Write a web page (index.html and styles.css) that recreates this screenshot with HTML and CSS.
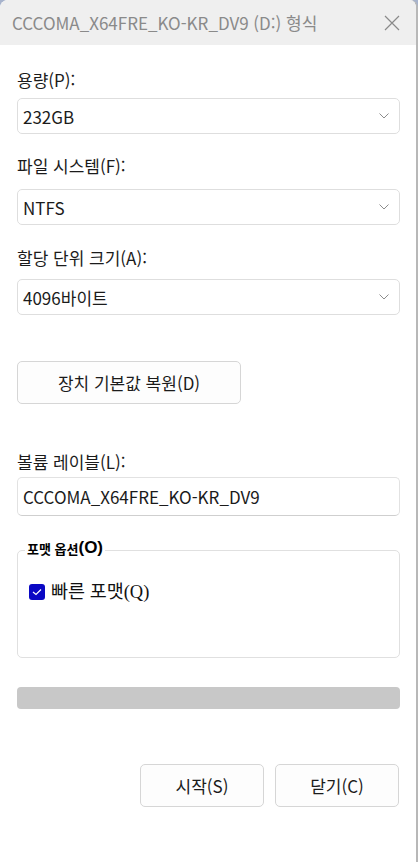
FILE: index.html
```html
<!DOCTYPE html>
<html lang="ko">
<head>
<meta charset="utf-8">
<title>형식</title>
<link rel="stylesheet" href="styles.css">
</head>
<body>
<div class="window">
  <div class="titlebar">
    <span class="title">CCCOMA_X64FRE_KO-KR_DV9 (D:) 형식</span>
    <svg class="close" width="16" height="16" viewBox="0 0 16 16"><path d="M1 1 L15 15 M15 1 L1 15" stroke="#8a8a8a" stroke-width="1.2" fill="none"/></svg>
  </div>
  <div class="content">
    <div class="label l1">용량(P):</div>
    <div class="select s1"><span>232GB</span><svg class="chev" width="10" height="6" viewBox="0 0 10 6"><path d="M0.5 0.5 L5 5 L9.5 0.5" stroke="#8c8c8c" stroke-width="1" fill="none"/></svg></div>
    <div class="label l2">파일 시스템(F):</div>
    <div class="select s2"><span>NTFS</span><svg class="chev" width="10" height="6" viewBox="0 0 10 6"><path d="M0.5 0.5 L5 5 L9.5 0.5" stroke="#8c8c8c" stroke-width="1" fill="none"/></svg></div>
    <div class="label l3">할당 단위 크기(A):</div>
    <div class="select s3"><span>4096바이트</span><svg class="chev" width="10" height="6" viewBox="0 0 10 6"><path d="M0.5 0.5 L5 5 L9.5 0.5" stroke="#8c8c8c" stroke-width="1" fill="none"/></svg></div>
    <div class="btn restore">장치 기본값 복원(D)</div>
    <div class="label l4">볼륨 레이블(L):</div>
    <div class="input">CCCOMA_X64FRE_KO-KR_DV9</div>
    <div class="group">
      <div class="legend"><span class="lg-ko">포맷 옵션</span><span class="lg-key">(O)</span></div>
      <div class="check-row">
        <span class="checkbox"><svg width="10" height="8" viewBox="0 0 10 8"><path d="M1 4 L4 6.5 L9 1.5" stroke="#fff" stroke-width="1.2" fill="none"/></svg></span>
        <span class="check-label">빠른 포맷(Q)</span>
      </div>
    </div>
    <div class="progress"></div>
    <div class="actions">
      <div class="btn action">시작(S)</div>
      <div class="btn action">닫기(C)</div>
    </div>
  </div>
</div>
</body>
</html>
```

FILE: styles.css
```css
html, body {
  margin: 0;
  padding: 0;
  background: #a7b3cc;
}
body {
  font-family: "Noto Sans CJK KR", "Noto Sans", sans-serif;
  color: #1b1b1b;
}
.window {
  width: 416px;
  height: 862px;
  background: #fff;
  border-radius: 8px 8px 0 0;
  border-right: 2px solid #b8b8b8;
  overflow: hidden;
  display: flex;
  flex-direction: column;
}
.titlebar {
  height: 45px;
  flex: none;
  background: #efefef;
  display: flex;
  align-items: center;
  justify-content: space-between;
  padding: 0 16px 0 12px;
}
.title {
  font-size: 17px;
  color: #8a8a8a;
  white-space: nowrap;
}
.close { display: block; }
.content {
  padding: 0 16px 0 17px;
  display: flex;
  flex-direction: column;
}
.label {
  font-size: 17px;
  line-height: 20px;
  height: 20px;
  white-space: nowrap;
}
.l1 { margin-top: 25px; }
.l2 { margin-top: 22px; }
.l3 { margin-top: 23px; }
.l4 { margin-top: 48px; }
.select {
  height: 36px;
  box-sizing: border-box;
  border: 1px solid #dedede;
  border-radius: 5px;
  display: flex;
  align-items: center;
  justify-content: space-between;
  padding: 0 10px 0 5px;
  font-size: 17px;
}
.s1 { margin-top: 8px; }
.s2 { margin-top: 13px; }
.s3 { margin-top: 11px; }
.chev { display: block; }
.btn {
  box-sizing: border-box;
  border: 1px solid #d6d6d6;
  border-radius: 5px;
  background: #fdfdfd;
  display: flex;
  align-items: center;
  justify-content: center;
  font-size: 17px;
  height: 43px;
}
.restore {
  width: 224px;
  margin-top: 46px;
}
.input {
  margin-top: 5px;
  height: 39px;
  box-sizing: border-box;
  border: 1px solid #e2e2e2;
  border-bottom-color: #cfcfcf;
  border-radius: 5px;
  display: flex;
  align-items: center;
  padding: 0 5px;
  font-size: 17px;
}
.group {
  position: relative;
  margin-top: 34px;
  height: 108px;
  box-sizing: border-box;
  border: 1px solid #e0e0e0;
  border-radius: 5px;
  padding: 31px 11px 0;
}
.legend {
  position: absolute;
  left: 7px;
  top: -13px;
  padding: 0 2px;
  background: #fff;
  display: flex;
  align-items: center;
  height: 20px;
  color: #000;
}
.lg-ko {
  font-size: 13px;
  font-weight: 700;
}
.lg-key {
  font-family: "Liberation Sans", sans-serif;
  font-size: 17px;
  font-weight: 700;
}
.check-row {
  display: flex;
  align-items: center;
  gap: 6px;
}
.checkbox {
  width: 16px;
  height: 16px;
  border-radius: 3px;
  background: #0a08c4;
  display: flex;
  align-items: center;
  justify-content: center;
}
.checkbox svg { display: block; }
.check-label {
  font-family: "Liberation Serif", "Noto Sans CJK KR", serif;
  font-size: 18.5px;
  line-height: 20px;
  color: #111;
}
.progress {
  margin-top: 29px;
  height: 22px;
  border-radius: 4px;
  background: #c8c8c8;
}
.actions {
  margin-top: 55px;
  display: flex;
  justify-content: flex-end;
  gap: 11px;
  padding-right: 1px;
}
.action {
  width: 124px;
}
```
